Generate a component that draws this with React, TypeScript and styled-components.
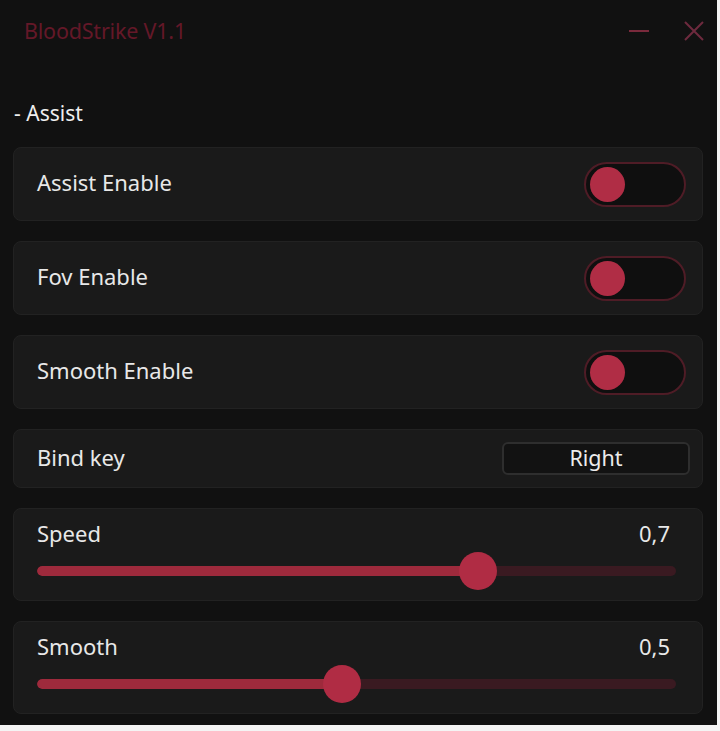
import React from 'react';
import styled, { createGlobalStyle } from 'styled-components';

const GlobalStyle = createGlobalStyle`
  html, body {
    margin: 0;
    padding: 0;
    background: #f4f4f4;
  }
  * { box-sizing: border-box; }
`;

const toggles = ['Assist Enable', 'Fov Enable', 'Smooth Enable'];

// pos = where the thumb sits on the rail (0..1), value = what is shown
const sliders = [
    { label: 'Speed', value: '0,7', pos: 0.69 },
    { label: 'Smooth', value: '0,5', pos: 0.477 },
];

const App = () => {
    return (
        <>
            <GlobalStyle />
            <Window>
                <TitleBar>
                    <Title>BloodStrike V1.1</Title>
                    <Controls>
                        <svg width="22" height="4" viewBox="0 0 22 4">
                            <line x1="1" y1="2" x2="21" y2="2" stroke="#7a2a3c" strokeWidth="2" />
                        </svg>
                        <svg width="22" height="22" viewBox="0 0 22 22">
                            <path d="M2 2 L20 20 M20 2 L2 20" stroke="#6e2a3e" strokeWidth="2" />
                        </svg>
                    </Controls>
                </TitleBar>

                <Heading>- Assist</Heading>

                <CardList>
                    {toggles.map((t) => (
                        <RowCard key={t} $height={74}>
                            <Label>{t}</Label>
                            <Switch>
                                <Knob />
                            </Switch>
                        </RowCard>
                    ))}

                    <RowCard $height={59}>
                        <Label>Bind key</Label>
                        <KeyButton>Right</KeyButton>
                    </RowCard>

                    {sliders.map((s) => (
                        <SliderCard key={s.label}>
                            <LabelRow>
                                <Label>{s.label}</Label>
                                <Value>{s.value}</Value>
                            </LabelRow>
                            <Track>
                                <Rail>
                                    <Fill style={{ width: `${s.pos * 100}%` }} />
                                </Rail>
                                <Thumb style={{ left: `${s.pos * 100}%` }} />
                            </Track>
                        </SliderCard>
                    ))}
                </CardList>
            </Window>
        </>
    );
};

const Window = styled.div`
  width: 717px;
  height: 725px;
  background: #111111;
  font-family: "Noto Sans", "Open Sans", sans-serif;
  overflow: hidden;
  display: flex;
  flex-direction: column;
`;

const TitleBar = styled.div`
  height: 60px;
  display: flex;
  align-items: center;
  padding: 0 12px 0 24px;
`;

const Title = styled.div`
  color: #641828;
  font-size: 21.5px;
  letter-spacing: -0.2px;
`;

const Controls = styled.div`
  margin-left: auto;
  display: flex;
  align-items: center;
  gap: 33px;
  padding-top: 2px;
`;

const Heading = styled.div`
  margin: 39px 0 20px 14px;
  height: 28px;
  line-height: 28px;
  color: #efefef;
  font-size: 21px;
`;

const CardList = styled.div`
  display: flex;
  flex-direction: column;
  gap: 20px;
  padding-left: 13px;
  width: 703px;
`;

const Card = styled.div`
  background: #1a1a1a;
  border: 1px solid #222222;
  border-radius: 8px;
`;

const RowCard = styled(Card)<{ $height: number }>`
  height: ${(p) => p.$height}px;
  display: flex;
  align-items: center;
  justify-content: space-between;
  padding: 0 16px 0 23px;
`;

const Label = styled.div`
  color: #e8e8e8;
  font-size: 22px;
  line-height: 28px;
  padding-bottom: 4px;
`;

const Switch = styled.div`
  width: 102px;
  height: 45px;
  border: 2px solid #4f1c26;
  border-radius: 23px;
  background: #0f0f0f;
  display: flex;
  align-items: center;
  padding-left: 4px;
`;

const Knob = styled.div`
  width: 35px;
  height: 35px;
  border-radius: 50%;
  background: #b02d45;
`;

const KeyButton = styled.div`
  width: 188px;
  height: 33px;
  margin-right: -4px;
  border: 2px solid #2e2e2e;
  border-radius: 6px;
  background: #121212;
  color: #ececec;
  font-size: 21.5px;
  padding-bottom: 2px;
  display: flex;
  align-items: center;
  justify-content: center;
`;

const SliderCard = styled(Card)`
  height: 93px;
  padding: 10px 26px 0 23px;
  display: flex;
  flex-direction: column;
`;

const LabelRow = styled.div`
  display: flex;
  justify-content: space-between;
  align-items: center;
`;

const Value = styled.div`
  color: #e8e8e8;
  font-size: 22px;
  line-height: 28px;
  padding: 0 6px 4px 0;
`;

const Track = styled.div`
  position: relative;
  margin-top: 1px;
  height: 38px;
  display: flex;
  align-items: center;
`;

const Rail = styled.div`
  width: 100%;
  height: 10px;
  border-radius: 5px;
  background: #3a1a21;
  overflow: hidden;
`;

const Fill = styled.div`
  height: 100%;
  background: #9e2a3c;
  border-radius: 5px;
`;

const Thumb = styled.div`
  position: absolute;
  top: 0;
  width: 38px;
  height: 38px;
  margin-left: -19px;
  border-radius: 50%;
  background: #b02c44;
`;

export default App;
